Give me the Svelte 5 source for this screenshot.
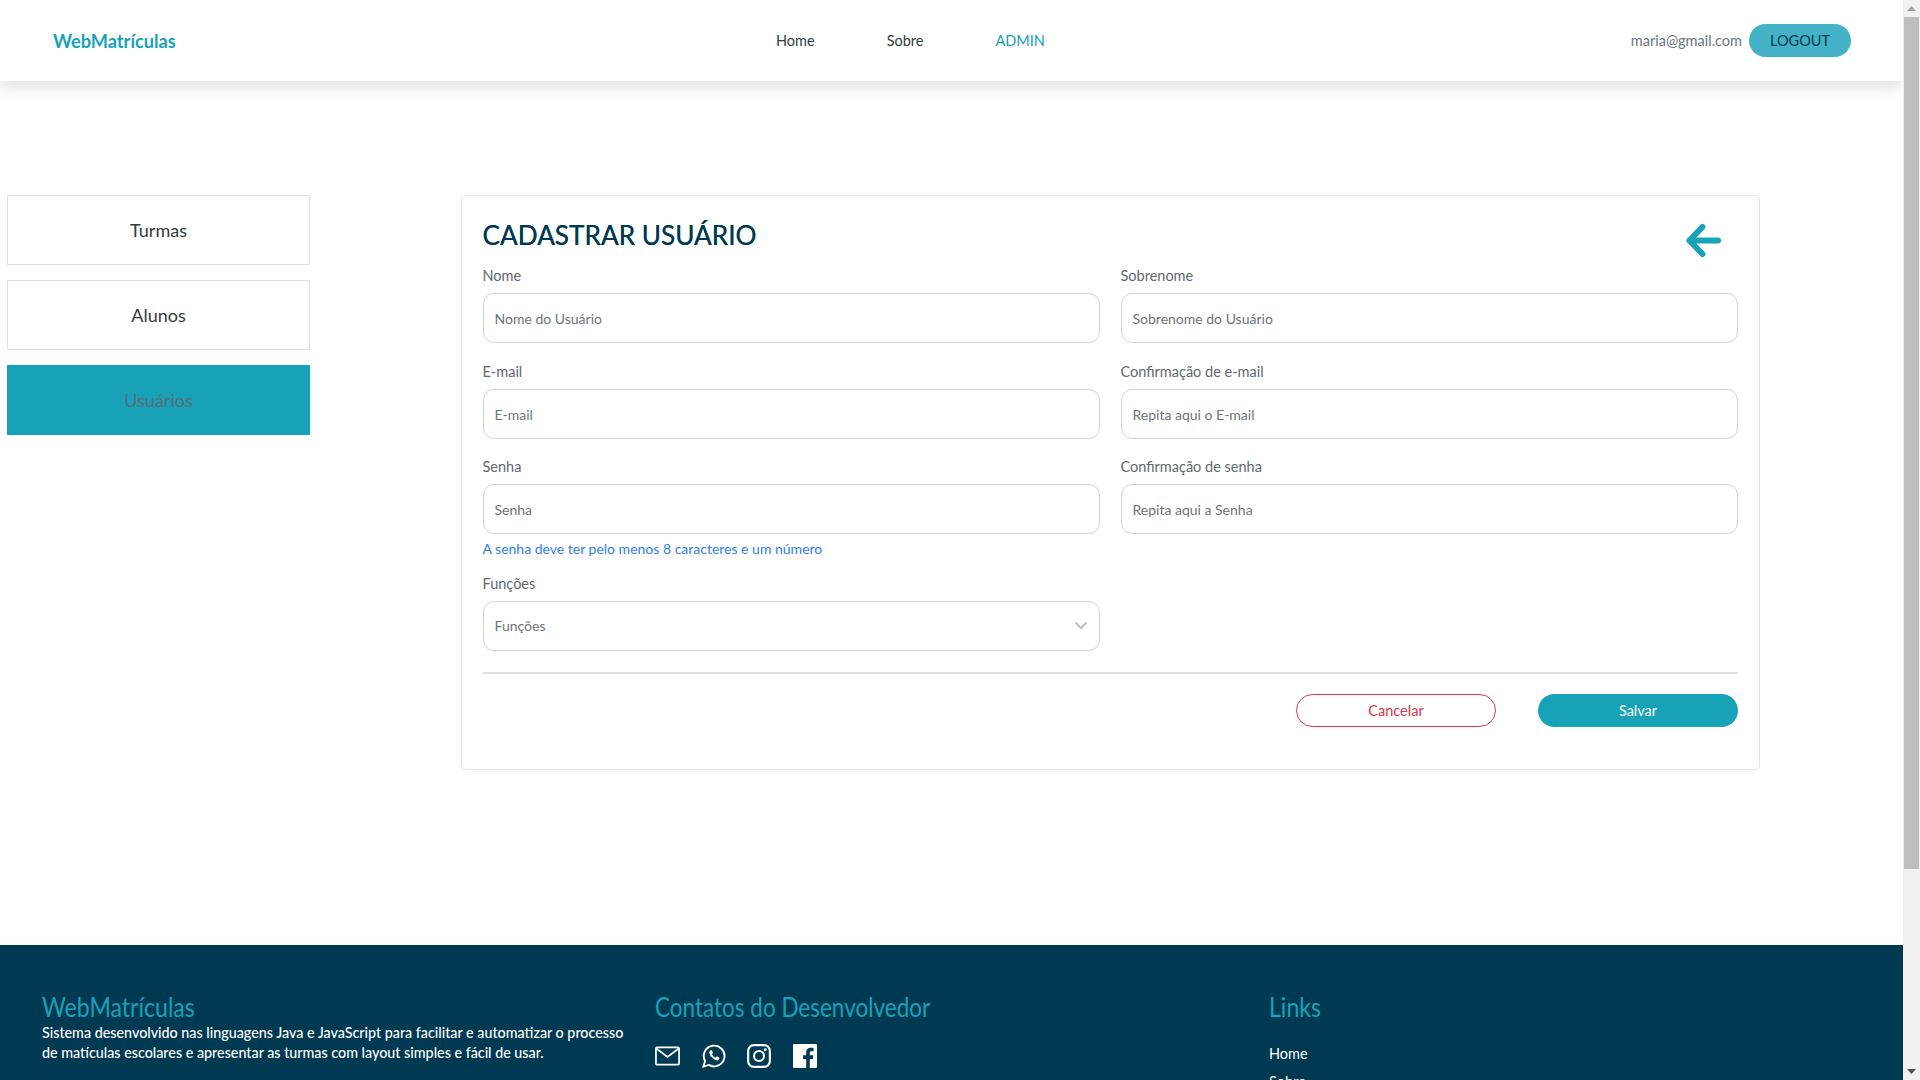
<script>
  const rows = [
    [{ l: 'Nome', p: 'Nome do Usuário' }, { l: 'Sobrenome', p: 'Sobrenome do Usuário' }],
    [{ l: 'E-mail', p: 'E-mail' }, { l: 'Confirmação de e-mail', p: 'Repita aqui o E-mail' }],
    [{ l: 'Senha', p: 'Senha' }, { l: 'Confirmação de senha', p: 'Repita aqui a Senha' }]
  ];
</script>

<div class="page">
  <div class="content">
    <header class="top">
      <a class="logo">WebMatrículas</a>
      <nav class="nav">
        <a>Home</a>
        <a>Sobre</a>
        <a class="on">ADMIN</a>
      </nav>
      <div class="user">
        <span>maria@gmail.com</span>
        <button class="logout">LOGOUT</button>
      </div>
    </header>

    <main class="main">
      <aside class="side">
        <div class="item">Turmas</div>
        <div class="item">Alunos</div>
        <div class="item active">Usuários</div>
      </aside>

      <section class="card">
        <div class="head">
          <h1>CADASTRAR USUÁRIO</h1>
          <svg class="back" viewBox="0 0 36 36" fill="none" stroke="#17a2b8" stroke-width="6" stroke-linecap="round" stroke-linejoin="round">
            <path d="M33 18H3.500M17 4 3.500 18 17 32" />
          </svg>
        </div>

        {#each rows as row, i}
          <div class="row r{i}">
            {#each row as f}
              <div class="field">
                <label>{f.l}</label>
                <input placeholder={f.p} />
              </div>
            {/each}
          </div>
        {/each}

        <p class="hint">A senha deve ter pelo menos 8 caracteres e um número</p>

        <div class="row">
          <div class="field">
            <label>Funções</label>
            <div class="select">
              <span>Funções</span>
              <svg width="14" height="9" viewBox="0 0 14 9" fill="none" stroke="#c4c4c4" stroke-width="2.4"><path d="M1.500 1.500 7 7l5.500-5.500" /></svg>
            </div>
          </div>
          <div class="field"></div>
        </div>

        <hr />

        <div class="actions">
          <button class="cancel">Cancelar</button>
          <button class="save">Salvar</button>
        </div>
      </section>
    </main>

    <footer class="foot">
      <div class="col first">
        <h2>WebMatrículas</h2>
        <p>Sistema desenvolvido nas linguagens Java e JavaScript para facilitar e automatizar o processo de matículas escolares e apresentar as turmas com layout simples e fácil de usar.</p>
      </div>
      <div class="col second">
        <h2 class="narrow">Contatos do Desenvolvedor</h2>
        <div class="icons">
          <svg width="25" height="20" viewBox="0 0 26 20" fill="none" stroke="#fff" stroke-width="1.8"><rect x="1" y="1" width="24" height="18" rx="1" /><path d="M1 2l12 9L25 2" /></svg>
          <svg width="24" height="24" viewBox="0 0 25 25" fill="none" stroke="#fff" stroke-width="2"><path d="M1.500 23.500 3.200 17.700A10.800 10.800 0 1 1 7.200 21.800Z" /><path fill="#fff" stroke="none" d="M9 6.500c-1 .6-1.700 1.700-1.300 3.200.8 3 3.600 6 6.800 7.300 1.500.5 2.800-.3 3.400-1.400l.2-1.300-2.800-1.500-1.300 1.400c-1.600-.6-3-2.100-3.700-3.700l1.200-1.200-1.200-2.900Z" /></svg>
          <svg width="24" height="24" viewBox="0 0 25 25" fill="none" stroke="#fff" stroke-width="2.200"><rect x="1.200" y="1.200" width="22.600" height="22.600" rx="6" /><circle cx="12.500" cy="12.500" r="5.200" /><circle cx="19" cy="6" r="1.500" fill="#fff" stroke="none" /></svg>
          <svg width="24" height="24" viewBox="0 0 25 25"><path fill="#fff" d="M1 0h23a1 1 0 0 1 1 1v23a1 1 0 0 1-1 1h-6.500v-9.500h3.200l.5-3.800h-3.700V9.300c0-1.100.3-1.800 1.900-1.800h2V4.100c-.4 0-1.500-.1-2.900-.1-2.900 0-4.800 1.700-4.800 5v2.700h-3.200v3.800h3.200V25H1a1 1 0 0 1-1-1V1a1 1 0 0 1 1-1Z" /></svg>
        </div>
      </div>
      <div class="col">
        <h2>Links</h2>
        <ul>
          <li>Home</li>
          <li>Sobre</li>
        </ul>
      </div>
    </footer>
  </div>

  <div class="scrollbar">
    <svg class="up" width="9" height="5" viewBox="0 0 9 5"><path fill="#a3a3a3" d="M4.500 0 9 5H0Z" /></svg>
    <div class="thumb"></div>
    <svg class="down" width="9" height="5" viewBox="0 0 9 5"><path fill="#505050" d="M0 0h9L4.500 5Z" /></svg>
  </div>
</div>

<style>
  :global(html), :global(body) { margin: 0; height: 100%; overflow: hidden; }
  * { box-sizing: border-box; }
  .page {
    display: flex;
    height: 1080px;
    overflow: hidden;
    background: #fff;
    font-family: "Lato", "Noto Sans", sans-serif;
    color: #495057;
  }
  .content { width: 1903px; flex: none; display: flex; flex-direction: column; }

  .top {
    height: 81px;
    flex: none;
    display: flex;
    align-items: center;
    position: relative;
    background: #fff;
    padding: 0 52px 0 53px;
    box-shadow: 0 4px 16px rgba(0, 0, 0, .15);
    font-size: 14.500px;
  }
  .logo { width: 723px; color: #17a2b8; font-size: 18.200px; font-weight: 700; }
  .nav { display: flex; gap: 72px; color: #343a40; }
  .nav .on { color: #17a2b8; }
  .user { margin-left: auto; display: flex; align-items: center; gap: 7px; color: #6c757d; }
  .logout {
    width: 102px; height: 33px; border: 0; border-radius: 17px;
    background: #43b2c6; color: #003a52;
    font: 14.500px "Lato", sans-serif;
  }

  .main { flex: none; height: 864px; padding: 114px 143px 0 7px; display: flex; gap: 151px; align-items: flex-start; }
  .side { width: 303px; flex: none; display: flex; flex-direction: column; gap: 15px; }
  .item {
    height: 70px; display: flex; align-items: center; justify-content: center;
    border: 1px solid #dee2e6; font-size: 18px; color: #343a40;
  }
  .active { background: #17a2b8; border-color: #17a2b8; color: #5c6b73; }

  .card {
    width: 1299px; height: 575px; flex: none;
    border: 1px solid #e2e4e6; border-radius: 5px;
    padding: 21px 21px 0 20.500px;
  }
  .head { height: 42px; margin-bottom: 7px; position: relative; }
  h1 { margin: 0; padding-top: 2px; font: 400 26.200px/32px "Lato", sans-serif; color: #003a52; text-shadow: 0 0 .4px #003a52; }
  .back { position: absolute; right: 17px; top: 6px; width: 35px; height: 35px; }

  .row { display: flex; gap: 20.500px; margin-bottom: 19px; }
  .r1 { margin-bottom: 18px; }
  .r2 { margin-bottom: 7px; }
  .field { flex: 1; min-width: 0; }
  label { display: block; height: 27px; font-size: 14.500px; line-height: 19px; color: #5f6970; }
  input, .select {
    display: flex; align-items: center; width: 100%; height: 50px;
    padding: 0 11px; border: 1px solid #ced4da; border-radius: 11px;
    font: 14px "Lato", sans-serif; color: #6c757d; background: #fff; outline: 0;
  }
  input::placeholder { color: #6c757d; opacity: 1; }
  .select { justify-content: space-between; padding-bottom: 1px; }
  .hint { margin: 0 0 14px; height: 19px; font-size: 14px; line-height: 16px; color: #2f80f0; }
  hr { margin: 21px 0 20px; border: 0; border-top: 2px solid #e0e0e0; }
  .actions { display: flex; justify-content: flex-end; gap: 42px; }
  .actions button { width: 200px; height: 33px; border-radius: 17px; font: 14.500px "Lato", sans-serif; }
  .cancel { background: #fff; border: 1px solid #dc3545; color: #dc3545; }
  .save { background: #17a2b8; border: 0; color: #fff; font-weight: 500; }

  .foot {
    flex: none; height: 135px; overflow: hidden;
    background: #003a52;
    padding: 46px 0 0 42px;
    display: flex;
    color: #fff;
  }
  .col { width: 613px; flex: none; }
  .second { width: 614px; }
  h2 { margin: 0; font: 400 27px/32px "Lato", sans-serif; color: #17a2b8; transform: scaleX(.855); transform-origin: left center; }
  h2.narrow { transform: scaleX(.833); }
  .col p { margin: 0; width: 595px; font-size: 14.300px; line-height: 20px; font-weight: 500; }
  .icons { display: flex; gap: 21.500px; align-items: center; margin-top: 21px; }
  ul { list-style: none; margin: 21px 0 0; padding: 0; font-size: 14.500px; line-height: 20px; }
  li { margin-bottom: 8px; }

  .scrollbar {
    width: 17px; flex: none; background: #f1f1f1;
    display: flex; flex-direction: column; align-items: center; position: relative;
  }
  .up { position: absolute; top: 6px; }
  .thumb { width: 15px; height: 852px; margin-top: 17px; background: #bebebe; }
  .down { position: absolute; bottom: 6px; }
</style>
